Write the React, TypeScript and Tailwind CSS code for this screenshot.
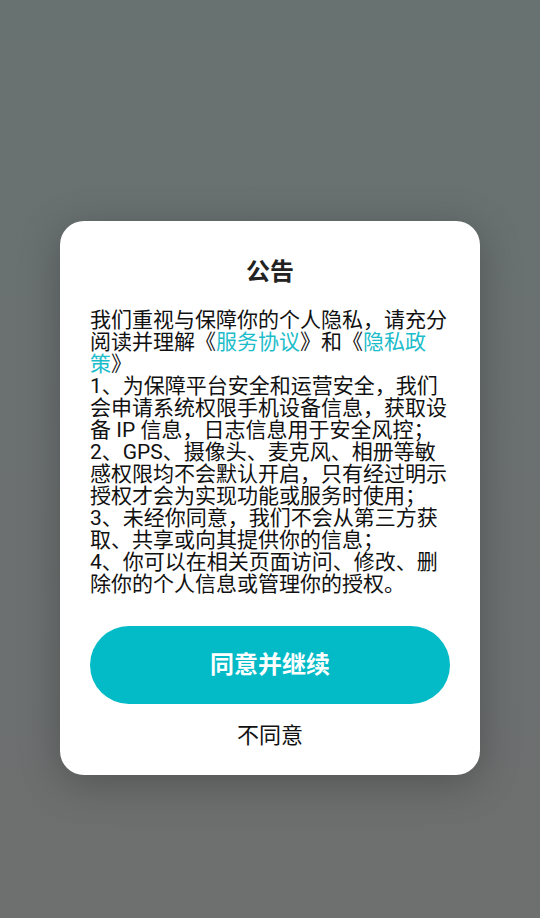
export default function App() {
  const items = [
    "1、为保障平台安全和运营安全，我们会申请系统权限手机设备信息，获取设备 IP 信息，日志信息用于安全风控；",
    "2、GPS、摄像头、麦克风、相册等敏感权限均不会默认开启，只有经过明示授权才会为实现功能或服务时使用；",
    "3、未经你同意，我们不会从第三方获取、共享或向其提供你的信息；",
    "4、你可以在相关页面访问、修改、删除你的个人信息或管理你的授权。",
  ];

  return (
    <div
      className="min-h-[918px] w-full bg-gradient-to-b from-[#687271] to-[#6e6f6f] pt-[221px] flex justify-center"
      style={{ fontFamily: '"Roboto", "Noto Sans CJK SC", sans-serif' }}
    >
      <div className="w-[420px] h-[554px] bg-white rounded-[24px] shadow-[0_8px_40px_rgba(0,0,0,0.25)] px-[30px] pt-[35px] flex flex-col">
        <h2 className="text-center text-[24px] leading-[32px] font-bold text-[#222]">公告</h2>

        <div className="mt-[21px] text-[21px] leading-[22px] text-[#111]">
          <p>
            我们重视与保障你的个人隐私，请充分阅读并理解《
            <span className="text-[#1cbcca]">服务协议</span>》和《
            <span className="text-[#1cbcca]">隐私政策</span>》
          </p>
          {items.map((t) => (
            <p key={t}>{t}</p>
          ))}
        </div>

        <button className="mt-[31px] h-[78px] w-full rounded-full bg-[#03bbc7] text-white text-[24px] font-semibold">
          同意并继续
        </button>
        <button className="mt-[17px] text-[22px] leading-[30px] text-[#111]">不同意</button>
      </div>
    </div>
  );
}
